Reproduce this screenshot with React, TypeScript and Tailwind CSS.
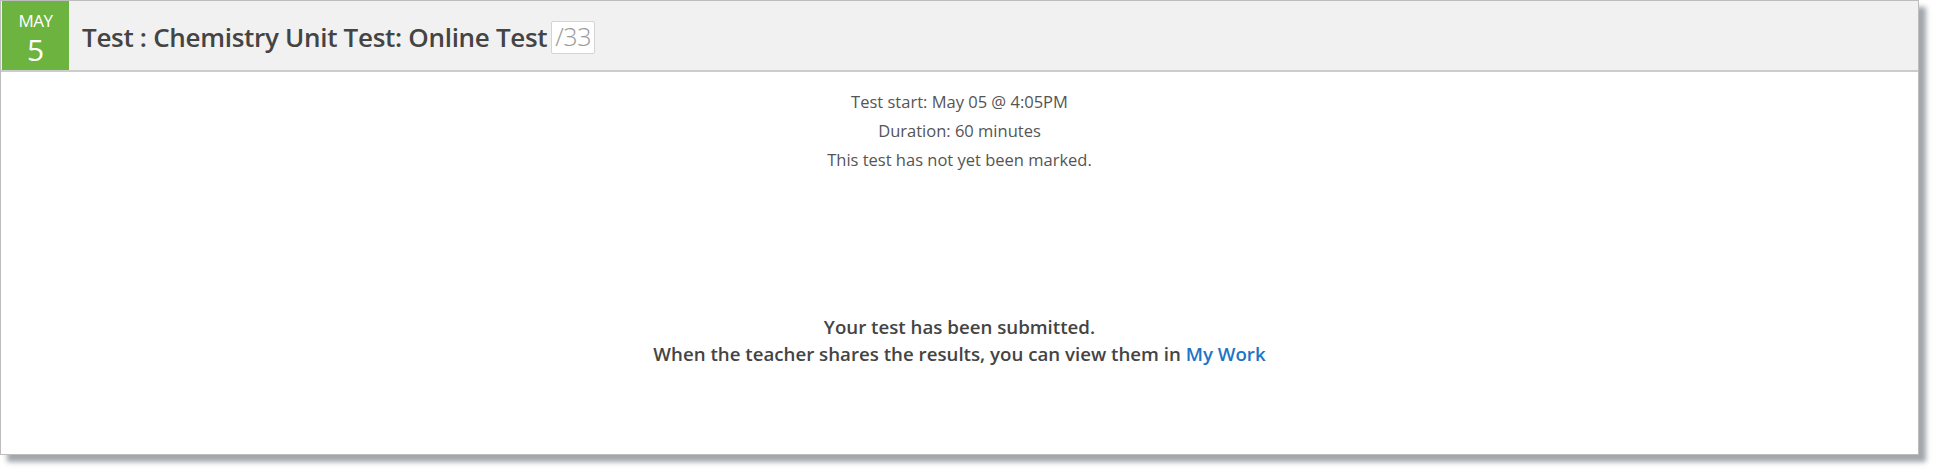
export default function App() {
  return (
    <div className="w-[1934px] h-[470px] bg-white" style={{ fontFamily: '"Open Sans", "Noto Sans", sans-serif' }}>
      <div className="w-[1919px] h-[455px] border border-[#bdbdbd] bg-white flex flex-col shadow-[7px_7px_5px_rgba(100,108,116,0.6)]">
        <div className="h-[71px] shrink-0 flex items-stretch bg-[#f1f1f1] border-b-2 border-[#cccccc]">
          <div className="w-[67px] ml-[1px] bg-[#6db33f] flex flex-col items-center text-white leading-none pt-[11px]">
            <span className="text-[17px] tracking-[-0.5px]">MAY</span>
            <span className="text-[30px] mt-[6px]">5</span>
          </div>
          <div className="flex items-center pl-[13px] pt-[3px]">
            <span className="text-[26px] font-semibold text-[#444444] tracking-[-0.3px]">Test : Chemistry Unit Test: Online Test</span>
            <span className="ml-[4px] h-[33px] px-[3px] flex items-center border border-[#d4d4d4] rounded-[2px] bg-white text-[25px] font-light text-[#999999] tracking-[-0.5px]">/33</span>
          </div>
        </div>
        <div className="flex-1 flex flex-col items-center text-[#555555]">
          <div className="pt-[15px] flex flex-col items-center text-[16.5px] leading-[29px]">
            <div>Test start: May 05 @ 4:05PM</div>
            <div>Duration: 60 minutes</div>
            <div>This test has not yet been marked.</div>
          </div>
          <div className="mt-[139px] flex flex-col items-center text-[18.7px] leading-[27px] font-semibold text-[#444444]">
            <div>Your test has been submitted.</div>
            <div>
              When the teacher shares the results, you can view them in <a className="text-[#1f74c4] font-semibold">My Work</a>
            </div>
          </div>
        </div>
      </div>
    </div>
  );
}
